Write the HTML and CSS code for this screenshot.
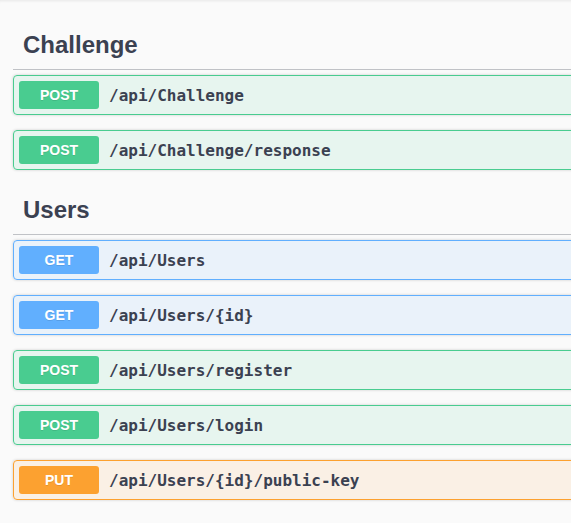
FILE: index.html
```html
<!DOCTYPE html>
<html>
<head>
<meta charset="utf-8">
<link rel="stylesheet" href="styles.css">
</head>
<body>
<div class="wrapper">
  <section class="tag-section">
    <h3 class="tag">Challenge</h3>
    <div class="opblock post"><span class="method">POST</span><span class="path">/api/Challenge</span></div>
    <div class="opblock post"><span class="method">POST</span><span class="path">/api/Challenge/response</span></div>
  </section>
  <section class="tag-section">
    <h3 class="tag">Users</h3>
    <div class="opblock get"><span class="method">GET</span><span class="path">/api/Users</span></div>
    <div class="opblock get"><span class="method">GET</span><span class="path">/api/Users/{id}</span></div>
    <div class="opblock post"><span class="method">POST</span><span class="path">/api/Users/register</span></div>
    <div class="opblock post"><span class="method">POST</span><span class="path">/api/Users/login</span></div>
    <div class="opblock put"><span class="method">PUT</span><span class="path">/api/Users/{id}/public-key</span></div>
  </section>
</div>
</body>
</html>
```

FILE: styles.css
```css
html, body {
  margin: 0;
  padding: 0;
  overflow: hidden;
  background: #fafafa;
}
body {
  font-family: "Liberation Sans", Arial, sans-serif;
  color: #3b4151;
  box-shadow: inset 0 3px 3px -2px rgba(0, 0, 0, 0.08);
  min-height: 523px;
}
.wrapper {
  width: 660px;
  padding: 20px 0 0 13px;
}
.tag-section {
  display: flex;
  flex-direction: column;
}
.tag {
  margin: 0 0 5px;
  padding: 10px 20px 10px 10px;
  font-size: 24px;
  line-height: 29px;
  font-weight: bold;
  color: #3b4151;
  border-bottom: 1px solid rgba(59, 65, 81, 0.3);
}
.opblock {
  display: flex;
  align-items: center;
  margin: 0 0 15px;
  padding: 5px;
  border: 1px solid;
  border-radius: 4px;
  box-shadow: 0 0 3px rgba(0, 0, 0, 0.19);
}
.method {
  min-width: 80px;
  padding: 6px 0;
  font-size: 14px;
  line-height: 16px;
  font-weight: bold;
  text-align: center;
  color: #fff;
  border-radius: 3px;
  text-shadow: 0 1px 0 rgba(0, 0, 0, 0.1);
}
.path {
  padding: 0 10px;
  font-family: "DejaVu Sans Mono", "Liberation Mono", monospace;
  font-size: 16px;
  font-weight: bold;
  color: #3b4151;
}
.post { background: rgba(73, 204, 144, 0.1); border-color: #49cc90; }
.post .method { background: #49cc90; }
.get { background: rgba(97, 175, 254, 0.1); border-color: #61affe; }
.get .method { background: #61affe; }
.put { background: rgba(252, 161, 48, 0.1); border-color: #fca130; }
.put .method { background: #fca130; }
```
